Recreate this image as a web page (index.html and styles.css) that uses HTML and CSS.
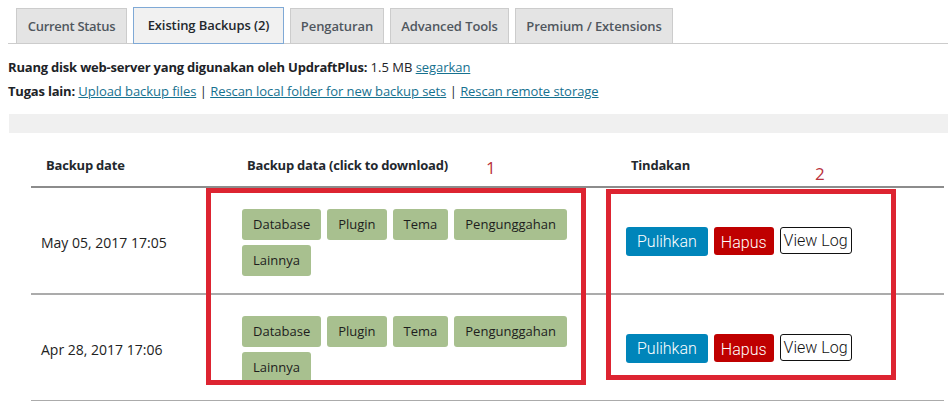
FILE: index.html
```html
<!DOCTYPE html>
<html lang="id">
<head>
<meta charset="utf-8">
<title>UpdraftPlus - Existing Backups</title>
<link rel="stylesheet" href="styles.css">
</head>
<body>
<div class="page">
  <nav class="tabs">
    <a class="tab tab-status">Current Status</a>
    <a class="tab tab-backups active">Existing Backups (2)</a>
    <a class="tab tab-settings">Pengaturan</a>
    <a class="tab tab-tools">Advanced Tools</a>
    <a class="tab tab-premium">Premium / Extensions</a>
  </nav>

  <p class="info info-first"><b>Ruang disk web-server yang digunakan oleh UpdraftPlus:</b> 1.5 MB <a href="#">segarkan</a></p>
  <p class="info"><b>Tugas lain:</b> <a href="#">Upload backup files</a> | <a href="#">Rescan local folder for new backup sets</a> | <a href="#">Rescan remote storage</a></p>

  <div class="bar"></div>

  <table class="backups">
    <thead>
      <tr>
        <th class="c-date">Backup date</th>
        <th class="c-data">Backup data (click to download)</th>
        <th class="c-act">Tindakan</th>
      </tr>
    </thead>
    <tbody>
      <tr>
        <td class="c-date date">May 05, 2017 17:05</td>
        <td class="c-data">
          <div class="chips">
            <span class="chip">Database</span>
            <span class="chip">Plugin</span>
            <span class="chip">Tema</span>
            <span class="chip">Pengunggahan</span>
            <span class="chip">Lainnya</span>
          </div>
        </td>
        <td class="c-act">
          <div class="actions">
            <span class="btn btn-restore">Pulihkan</span>
            <span class="btn btn-delete">Hapus</span>
            <span class="btn btn-log">View Log</span>
          </div>
        </td>
      </tr>
      <tr>
        <td class="c-date date">Apr 28, 2017 17:06</td>
        <td class="c-data">
          <div class="chips">
            <span class="chip">Database</span>
            <span class="chip">Plugin</span>
            <span class="chip">Tema</span>
            <span class="chip">Pengunggahan</span>
            <span class="chip">Lainnya</span>
          </div>
        </td>
        <td class="c-act">
          <div class="actions">
            <span class="btn btn-restore">Pulihkan</span>
            <span class="btn btn-delete">Hapus</span>
            <span class="btn btn-log">View Log</span>
          </div>
        </td>
      </tr>
    </tbody>
  </table>

  <div class="mark mark-1"></div>
  <div class="mark mark-2"></div>
  <span class="mark-num num-1">1</span>
  <span class="mark-num num-2">2</span>
</div>
</body>
</html>
```

FILE: styles.css
```css
* { box-sizing: border-box; }

html, body {
  margin: 0;
  background: #fff;
}

body {
  font-family: "Open Sans", "Noto Sans", Arial, sans-serif;
  font-size: 13px;
  color: #23282d;
}

.page {
  position: relative;
  width: 948px;
  height: 401px;
  overflow: hidden;
}

/* Tabs */
.tabs {
  display: flex;
  align-items: flex-start;
  gap: 6px;
  margin-left: 8px;
  padding: 8px 0 0 8px;
  border-bottom: 1px solid #cccccc;
  height: 44px;
}

.tab {
  display: block;
  flex: none;
  height: 35px;
  line-height: 34px;
  padding: 0;
  text-align: center;
  background: #e4e4e4;
  border: 1px solid #cccccc;
  border-bottom: none;
  color: #50575e;
  font-weight: 600;
  font-size: 13px;
  letter-spacing: -0.1px;
  white-space: nowrap;
}

.tab-status { width: 111px; letter-spacing: -0.3px; }
.tab-backups { width: 151px; }
.tab-settings { width: 94px; }
.tab-tools { width: 119px; }
.tab-premium { width: 158px; }

.tab.active {
  margin-top: -1px;
  height: 37px;
  background: #f1f1f1;
  border: 1px solid #7fa9d6;
  color: #23282d;
  line-height: 35px;
}

/* Info lines */
.info {
  margin: 0;
  padding-left: 8px;
  line-height: 24px;
  font-size: 13px;
  color: #1d2327;
}

.info-first { margin-top: 11px; }

.info b {
  font-weight: 700;
  letter-spacing: -0.2px;
}

.info a {
  color: #16718f;
  text-decoration: underline;
  letter-spacing: -0.06px;
}

/* grey bar */
.bar {
  margin: 11px 0 0 9px;
  height: 19px;
  background: #f0f0f0;
}

/* Table */
.backups {
  margin: 10px 0 0 31px;
  width: 913px;
  border-collapse: collapse;
  table-layout: fixed;
}

.backups th {
  text-align: left;
  font-weight: 700;
  font-size: 13px;
  letter-spacing: -0.2px;
  line-height: 20px;
  padding: 12px 10px 11px 15px;
  border-bottom: 2px solid #8c8c8c;
  color: #23282d;
}

.backups td {
  vertical-align: middle;
  padding: 21px 10px 17px 10px;
  border-bottom: 2px solid #ababab;
}

.c-date { width: 201px; }
.c-data { width: 384px; }
.c-act { width: 328px; }

.backups td.c-data { padding-right: 16px; }

.date {
  font-size: 14px;
  color: #222;
  white-space: nowrap;
}

.chips {
  display: flex;
  flex-wrap: wrap;
  gap: 5px 6px;
}

.chip {
  display: block;
  height: 31px;
  line-height: 30px;
  padding: 0 11px;
  background: #a8c08f;
  border-radius: 3px;
  color: #1d1d1d;
  font-size: 13px;
  white-space: nowrap;
}

.actions {
  display: flex;
  align-items: flex-start;
  gap: 6px;
  margin-top: -3px;
}

.btn {
  display: block;
  font-family: Roboto, "Open Sans", sans-serif;
  font-size: 16px;
  font-weight: 300;
  border-radius: 3px;
  white-space: nowrap;
}

.btn-restore {
  height: 29px;
  line-height: 29px;
  padding: 0 11px;
  background: #0085ba;
  color: #fff;
}

.btn-delete {
  height: 28px;
  line-height: 31px;
  padding: 0 7px;
  background: #bf0000;
  color: #fff;
}

.btn-log {
  height: 27px;
  line-height: 25px;
  padding: 0 3px;
  background: #fff;
  border: 1px solid #111;
  color: #111;
}

/* annotation overlays */
.mark {
  position: absolute;
  border: 5px solid #dd2431;
}

.mark-1 {
  left: 206px;
  top: 188px;
  width: 380px;
  height: 197px;
}

.mark-2 {
  left: 606px;
  top: 189px;
  width: 290px;
  height: 191px;
}

.mark-num {
  position: absolute;
  font-family: "Open Sans", sans-serif;
  font-size: 17px;
  line-height: 20px;
  color: #b9323c;
}

.num-1 { left: 486px; top: 158px; }
.num-2 { left: 815px; top: 164px; }
```
